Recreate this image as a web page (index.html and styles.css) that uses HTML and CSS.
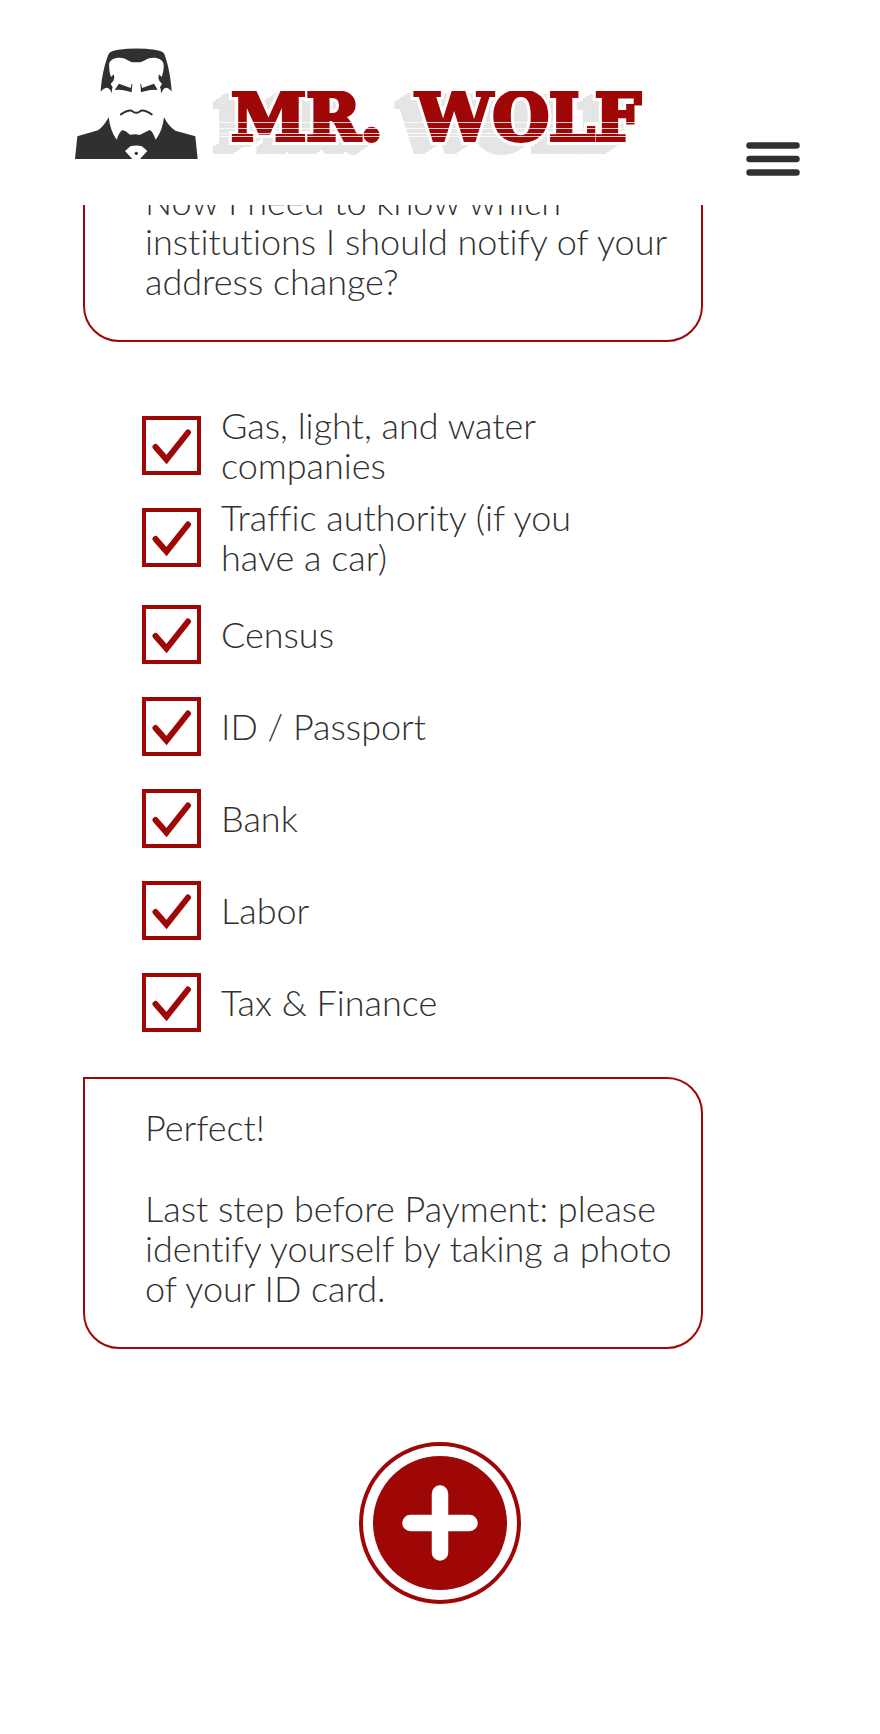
FILE: index.html
```html
<!DOCTYPE html>
<html lang="en">
<head>
<meta charset="utf-8">
<meta name="viewport" content="width=device-width, initial-scale=1">
<title>Mr. Wolf</title>
<link rel="stylesheet" href="styles.css">
</head>
<body>
<header class="header">
  <a class="brand" href="#" aria-label="Mr. Wolf home">
    <svg class="brand-face" viewBox="44 38 369 333" aria-hidden="true">
      <g fill="#303030">
        <path d="M121 169C123 130 133 84 145 56Q151 46 174 43Q228 36 283 43Q306 46 312 56C324 88 332 130 334 169Q325 157 317 157Q309 157 302 175Q303 163 299 156L305 145Q295 137 294 128L296 117L304 125Q313 100 309 83C303 68 280 64 262 70C249 76 248 81 228 81C208 81 207 76 194 70C176 64 153 68 147 83Q144 102 152 125L160 117L162 128Q161 137 151 146L157 156Q153 164 155 175Q148 157 140 157Q131 157 121 169Z"/>
        <path d="M176 145L211 158L214 145L216 146L214 171L200 167Q180 162 163 164Z"/>
        <path d="M281 145L245 158L242 145L240 146L242 171L256 167Q276 162 292 164Z"/>
        <path d="M44 371L51 303L113 285Q129 275 145 246Q150 288 169 313Q176 292 185 285Q193 284 209 298Q228 295 238 299Q253 291 268 284Q277 288 286 313Q306 288 311 246Q326 275 345 286L405 303L412 371H239L261 347L245 333Q228 328 210 333L194 347L216 371Z"/>
        <circle cx="228" cy="354" r="5"/>
      </g>
      <path d="M182 237Q202 223 214 226Q223 233 228 232Q235 233 242 226Q254 223 274 237" fill="none" stroke="#303030" stroke-width="6" stroke-linecap="round"/>
    </svg>
    <svg class="brand-name" viewBox="210 91 450 68" role="img" aria-label="Mr. Wolf">
      <defs>
        <g id="wordmark">
          <text x="231" y="140" class="wordmark-text"><tspan class="cap">M</tspan>R.</text>
          <text x="416" y="140" class="wordmark-text"><tspan class="cap">W</tspan>OLF</text>
        </g>
      </defs>
      <g class="wordmark-shade">
        <use href="#wordmark" x="-19" y="12"/>
        <use href="#wordmark" x="-16" y="10"/>
        <use href="#wordmark" x="-13" y="8"/>
        <use href="#wordmark" x="-10" y="6"/>
        <use href="#wordmark" x="-7" y="4"/>
      </g>
      <use class="wordmark-gap" href="#wordmark"/>
      <use class="wordmark-front" href="#wordmark"/>
      <path class="wordmark-lines" d="M208 122.500H660M208 128.500H660M208 133.500H660M208 136.500H660"/>
    </svg>
  </a>
  <button class="menu" type="button" aria-label="Menu">
    <svg class="menu-icon" viewBox="0 0 54 34" aria-hidden="true"><path d="M3.500 3.500H50.500M3.500 17H50.500M3.500 30.500H50.500" stroke="#303030" stroke-width="6.500" stroke-linecap="round"/></svg>
  </button>
</header>

<main class="chat">
  <section class="bubble">
    <p>Now I need to know which institutions I should notify of your address change?</p>
  </section>

  <form class="options">
    <div class="group">
      <label class="option"><span class="box"><input type="checkbox" checked><svg class="tick" viewBox="0 0 59 59" aria-hidden="true"><path d="M13.500 31L24.500 43.500L46 16.500"/></svg></span><span>Gas, light, and water companies</span></label>
      <label class="option"><span class="box"><input type="checkbox" checked><svg class="tick" viewBox="0 0 59 59" aria-hidden="true"><path d="M13.500 31L24.500 43.500L46 16.500"/></svg></span><span>Traffic authority (if you have a car)</span></label>
    </div>
    <div class="group">
      <label class="option"><span class="box"><input type="checkbox" checked><svg class="tick" viewBox="0 0 59 59" aria-hidden="true"><path d="M13.500 31L24.500 43.500L46 16.500"/></svg></span><span>Census</span></label>
      <label class="option"><span class="box"><input type="checkbox" checked><svg class="tick" viewBox="0 0 59 59" aria-hidden="true"><path d="M13.500 31L24.500 43.500L46 16.500"/></svg></span><span>ID / Passport</span></label>
      <label class="option"><span class="box"><input type="checkbox" checked><svg class="tick" viewBox="0 0 59 59" aria-hidden="true"><path d="M13.500 31L24.500 43.500L46 16.500"/></svg></span><span>Bank</span></label>
      <label class="option"><span class="box"><input type="checkbox" checked><svg class="tick" viewBox="0 0 59 59" aria-hidden="true"><path d="M13.500 31L24.500 43.500L46 16.500"/></svg></span><span>Labor</span></label>
      <label class="option"><span class="box"><input type="checkbox" checked><svg class="tick" viewBox="0 0 59 59" aria-hidden="true"><path d="M13.500 31L24.500 43.500L46 16.500"/></svg></span><span>Tax &amp; Finance</span></label>
    </div>
  </form>

  <section class="bubble">
    <p>Perfect!</p>
    <p>Last step before Payment: please identify yourself by taking a photo of your ID card.</p>
  </section>
</main>

<div class="actions">
  <button class="add" type="button" aria-label="Add photo">
    <svg class="add-icon" viewBox="0 0 162 162" aria-hidden="true">
      <circle cx="81" cy="81" r="79" fill="none" stroke="#9f0707" stroke-width="4"/>
      <circle cx="81" cy="81" r="67" fill="#9f0707"/>
      <path d="M81 51.500V110.500M51.500 81H110.500" stroke="#fff" stroke-width="16.500" stroke-linecap="round"/>
    </svg>
  </button>
</div>
</body>
</html>
```
FILE: styles.css
```css
* { box-sizing: border-box; }

body {
  margin: 0;
  background: #fff;
  color: #303030;
  font-family: Lato, "Open Sans", sans-serif;
  font-size: 36px;
  font-weight: 300;
  font-variant-ligatures: none;
  line-height: 40px;
}

p { margin: 0; }

button {
  border: 0;
  padding: 0;
  background: none;
  cursor: pointer;
}

svg { display: block; }

.header {
  position: fixed;
  inset: 0 0 auto 0;
  z-index: 1;
  display: flex;
  justify-content: space-between;
  align-items: flex-end;
  padding: 48px 80px 29px 75px;
  height: 205px;
  background: #fff;
}

.brand {
  display: flex;
  align-self: flex-start;
  align-items: flex-end;
  gap: 12px;
}

.brand-face { width: 123px; height: 111px; }

.brand-name { width: 450px; height: 68px; }

.wordmark-text {
  font-family: "DejaVu Serif", serif;
  font-size: 65px;
  font-weight: 700;
}

.cap { font-size: 68px; }

.wordmark-shade { fill: #e5e5e5; stroke: #e5e5e5; stroke-width: 4px; }
.wordmark-gap { fill: #fff; stroke: #fff; stroke-width: 10px; }
.wordmark-front { fill: #9f0707; stroke: #9f0707; stroke-width: 4px; }
.wordmark-lines { stroke: #fff; stroke-opacity: 0.8; }

.menu-icon { width: 54px; height: 34px; }

.chat { padding: 151px 83px 0; }

.bubble {
  display: grid;
  gap: 41px;
  max-width: 620px;
  padding: 28px 20px 39px 60px;
  border: 2px solid #9f0707;
  border-radius: 0 36px 36px 36px;
}

.options {
  display: grid;
  gap: 17px;
  padding: 63px 0 35px 59px;
}

.group { display: grid; gap: 12px; }

.option {
  display: flex;
  align-items: center;
  gap: 20px;
  max-width: 440px;
  min-height: 80px;
}

.box { display: grid; flex: none; }

.box > * { grid-area: 1 / 1; }

.box input {
  appearance: none;
  width: 59px;
  height: 59px;
  margin: 0;
  border: 4px solid #9f0707;
}

.tick {
  width: 59px;
  height: 59px;
  fill: none;
  stroke: #9f0707;
  stroke-width: 6px;
  stroke-linecap: round;
  visibility: hidden;
  pointer-events: none;
}

.box input:checked + .tick { visibility: visible; }

.actions {
  display: flex;
  justify-content: center;
  padding: 93px 0 130px;
}

.add-icon { width: 162px; height: 162px; }
```
